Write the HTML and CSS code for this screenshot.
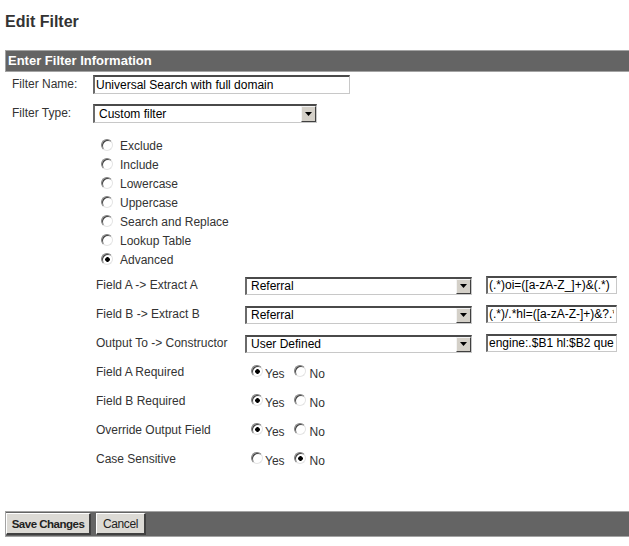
FILE: index.html
```html
<!DOCTYPE html>
<html>
<head>
<meta charset="utf-8">
<title>Edit Filter</title>
<link rel="stylesheet" href="styles.css">
</head>
<body>
<h1 class="title">Edit Filter</h1>
<div class="panel">
  <div class="bar bar-head">Enter Filter Information</div>

  <div class="top-rows">
    <div class="row">
      <span class="row-label">Filter Name:</span>
      <input class="text-input name-input" type="text" value="Universal Search with full domain" readonly>
    </div>
    <div class="row">
      <span class="row-label">Filter Type:</span>
      <div class="select type-select">
        <span class="select-text">Custom filter</span>
        <span class="select-btn"><svg width="7" height="4" viewBox="0 0 7 4"><polygon points="0,0 7,0 3.5,4" fill="#000"/></svg></span>
      </div>
    </div>
  </div>

  <div class="radio-list">
    <label class="radio-item"><input class="radio" type="radio" name="ft"><span>Exclude</span></label>
    <label class="radio-item"><input class="radio" type="radio" name="ft"><span>Include</span></label>
    <label class="radio-item"><input class="radio" type="radio" name="ft"><span>Lowercase</span></label>
    <label class="radio-item"><input class="radio" type="radio" name="ft"><span>Uppercase</span></label>
    <label class="radio-item"><input class="radio" type="radio" name="ft"><span>Search and Replace</span></label>
    <label class="radio-item"><input class="radio" type="radio" name="ft"><span>Lookup Table</span></label>
    <label class="radio-item"><input class="radio" type="radio" name="ft" checked><span>Advanced</span></label>
  </div>

  <div class="adv">
    <div class="adv-row">
      <span class="adv-label">Field A -&gt; Extract A</span>
      <div class="select field-select">
        <span class="select-text">Referral</span>
        <span class="select-btn"><svg width="7" height="4" viewBox="0 0 7 4"><polygon points="0,0 7,0 3.5,4" fill="#000"/></svg></span>
      </div>
      <input class="text-input expr-input" type="text" value="(.*)oi=([a-zA-Z_]+)&amp;(.*)" readonly>
    </div>
    <div class="adv-row">
      <span class="adv-label">Field B -&gt; Extract B</span>
      <div class="select field-select">
        <span class="select-text">Referral</span>
        <span class="select-btn"><svg width="7" height="4" viewBox="0 0 7 4"><polygon points="0,0 7,0 3.5,4" fill="#000"/></svg></span>
      </div>
      <input class="text-input expr-input" type="text" value="(.*)/.*hl=([a-zA-Z-]+)&amp;?.*q=([^&amp;]*)" readonly>
    </div>
    <div class="adv-row">
      <span class="adv-label">Output To -&gt; Constructor</span>
      <div class="select field-select">
        <span class="select-text">User Defined</span>
        <span class="select-btn"><svg width="7" height="4" viewBox="0 0 7 4"><polygon points="0,0 7,0 3.5,4" fill="#000"/></svg></span>
      </div>
      <input class="text-input expr-input" type="text" value="engine:.$B1 hl:$B2 query:$A3" readonly>
    </div>
    <div class="adv-row">
      <span class="adv-label">Field A Required</span>
      <div class="yesno">
        <label class="yn"><input class="radio" type="radio" name="fa" checked><span class="yn-text">Yes</span></label>
        <label class="yn"><input class="radio" type="radio" name="fa"><span class="yn-text">No</span></label>
      </div>
    </div>
    <div class="adv-row">
      <span class="adv-label">Field B Required</span>
      <div class="yesno">
        <label class="yn"><input class="radio" type="radio" name="fb" checked><span class="yn-text">Yes</span></label>
        <label class="yn"><input class="radio" type="radio" name="fb"><span class="yn-text">No</span></label>
      </div>
    </div>
    <div class="adv-row">
      <span class="adv-label">Override Output Field</span>
      <div class="yesno">
        <label class="yn"><input class="radio" type="radio" name="oo" checked><span class="yn-text">Yes</span></label>
        <label class="yn"><input class="radio" type="radio" name="oo"><span class="yn-text">No</span></label>
      </div>
    </div>
    <div class="adv-row">
      <span class="adv-label">Case Sensitive</span>
      <div class="yesno">
        <label class="yn"><input class="radio" type="radio" name="cs"><span class="yn-text">Yes</span></label>
        <label class="yn"><input class="radio" type="radio" name="cs" checked><span class="yn-text">No</span></label>
      </div>
    </div>
  </div>

  <div class="bar bar-foot">
    <button class="btn btn-save" type="button">Save Changes</button>
    <button class="btn btn-cancel" type="button">Cancel</button>
  </div>
</div>
</body>
</html>
```
FILE: styles.css
```css
html, body {
  overflow: hidden;
}
body {
  margin: 0;
  background: #fff;
  color: #333;
  font: 12px/1.2 "Liberation Sans", Arial, sans-serif;
}
.title {
  margin: 0;
  padding: 12px 0 0 5px;
  font-size: 16px;
  line-height: 19px;
  font-weight: bold;
  color: #333;
}
.panel {
  margin: 19px 0 0 5px;
  width: 640px;
}
.bar {
  background: #646464;
  border: 1px solid #a3a3a3;
  border-right: 0;
}
.bar-head {
  height: 20px;
  line-height: 20px;
  padding-left: 2px;
  color: #fff;
  font-weight: bold;
  font-size: 13px;
}
.top-rows {
  padding: 3px 0 0 7px;
}
.row {
  display: flex;
  align-items: center;
  height: 19px;
  margin-bottom: 10px;
}
.row-label {
  width: 81px;
  flex: none;
}
.text-input {
  box-sizing: border-box;
  margin: 0;
  font: 12px "Liberation Sans", Arial, sans-serif;
  color: #000;
  background: #fff;
  border-style: solid;
  border-width: 2px 1px 1px 2px;
  border-color: #4a4a4a #c8c8c8 #c8c8c8 #6a6a6a;
  outline: none;
  padding: 0 2px 0 1px;
}
.name-input {
  width: 257px;
  height: 19px;
}
.select {
  box-sizing: border-box;
  display: flex;
  align-items: stretch;
  background: #fff;
  color: #000;
  border-style: solid;
  border-width: 2px 1px 1px 2px;
  border-color: #4a4a4a #c8c8c8 #c8c8c8 #6a6a6a;
}
.select-text {
  flex: 1;
  display: flex;
  align-items: center;
  padding-left: 4px;
  white-space: nowrap;
  overflow: hidden;
}
.select-btn {
  box-sizing: border-box;
  width: 15px;
  display: flex;
  align-items: center;
  justify-content: center;
  background: #d4d0c8;
  border-style: solid;
  border-width: 1px;
  border-color: #f4f4f4 #404040 #404040 #f4f4f4;
}
.type-select {
  width: 224px;
  height: 19px;
}
.radio-list {
  margin-top: 14px;
  padding-left: 96px;
}
.radio-item {
  display: flex;
  align-items: center;
  height: 19px;
}
.radio {
  -webkit-appearance: none;
  appearance: none;
  box-sizing: border-box;
  width: 12px;
  height: 12px;
  margin: 0;
  flex: none;
  border-radius: 50%;
  border: 1px solid;
  border-color: #808080 #e4e4e4 #e4e4e4 #808080;
  box-shadow: inset 1px 1px 0 #404040;
  background: #fff;
}
.radio:checked {
  background: radial-gradient(circle at 55% 55%, #000 0 2px, #fff 2.6px);
}
.radio-item .radio {
  margin: 0 7px 4px 0;
}
.adv {
  padding: 1px 0 0 91px;
}
.adv-row {
  display: flex;
  align-items: center;
  height: 29px;
}
.adv-label {
  width: 149px;
  flex: none;
}
.field-select {
  width: 227px;
  height: 18px;
}
.expr-input {
  width: 131px;
  height: 18px;
  margin-left: 14px;
  margin-top: -2px;
}
.yesno {
  display: flex;
  align-items: center;
  padding-left: 6px;
}
.yn {
  display: flex;
  align-items: center;
  margin-right: 9px;
}
.yn .radio {
  margin: 0 2px 2px 0;
}
.yn + .yn .radio {
  margin-right: 4px;
}
.yn-text {
  margin-top: 4px;
}
.bar-foot {
  margin-top: 37px;
  height: 24px;
  display: flex;
  align-items: center;
  gap: 5px;
  padding-left: 0;
}
.btn {
  box-sizing: border-box;
  height: 22px;
  margin: 0;
  padding: 0;
  white-space: nowrap;
  font: 12px "Liberation Sans", Arial, sans-serif;
  letter-spacing: -0.4px;
  color: #222;
  background: #dcdad5;
  border-style: solid;
  border-width: 1px 2px 2px 1px;
  border-color: #fff #404040 #404040 #fff;
}
.btn-save {
  font-weight: bold;
  font-size: 11.5px;
  letter-spacing: -0.5px;
  width: 85px;
}
.btn-cancel {
  width: 50px;
}
```
